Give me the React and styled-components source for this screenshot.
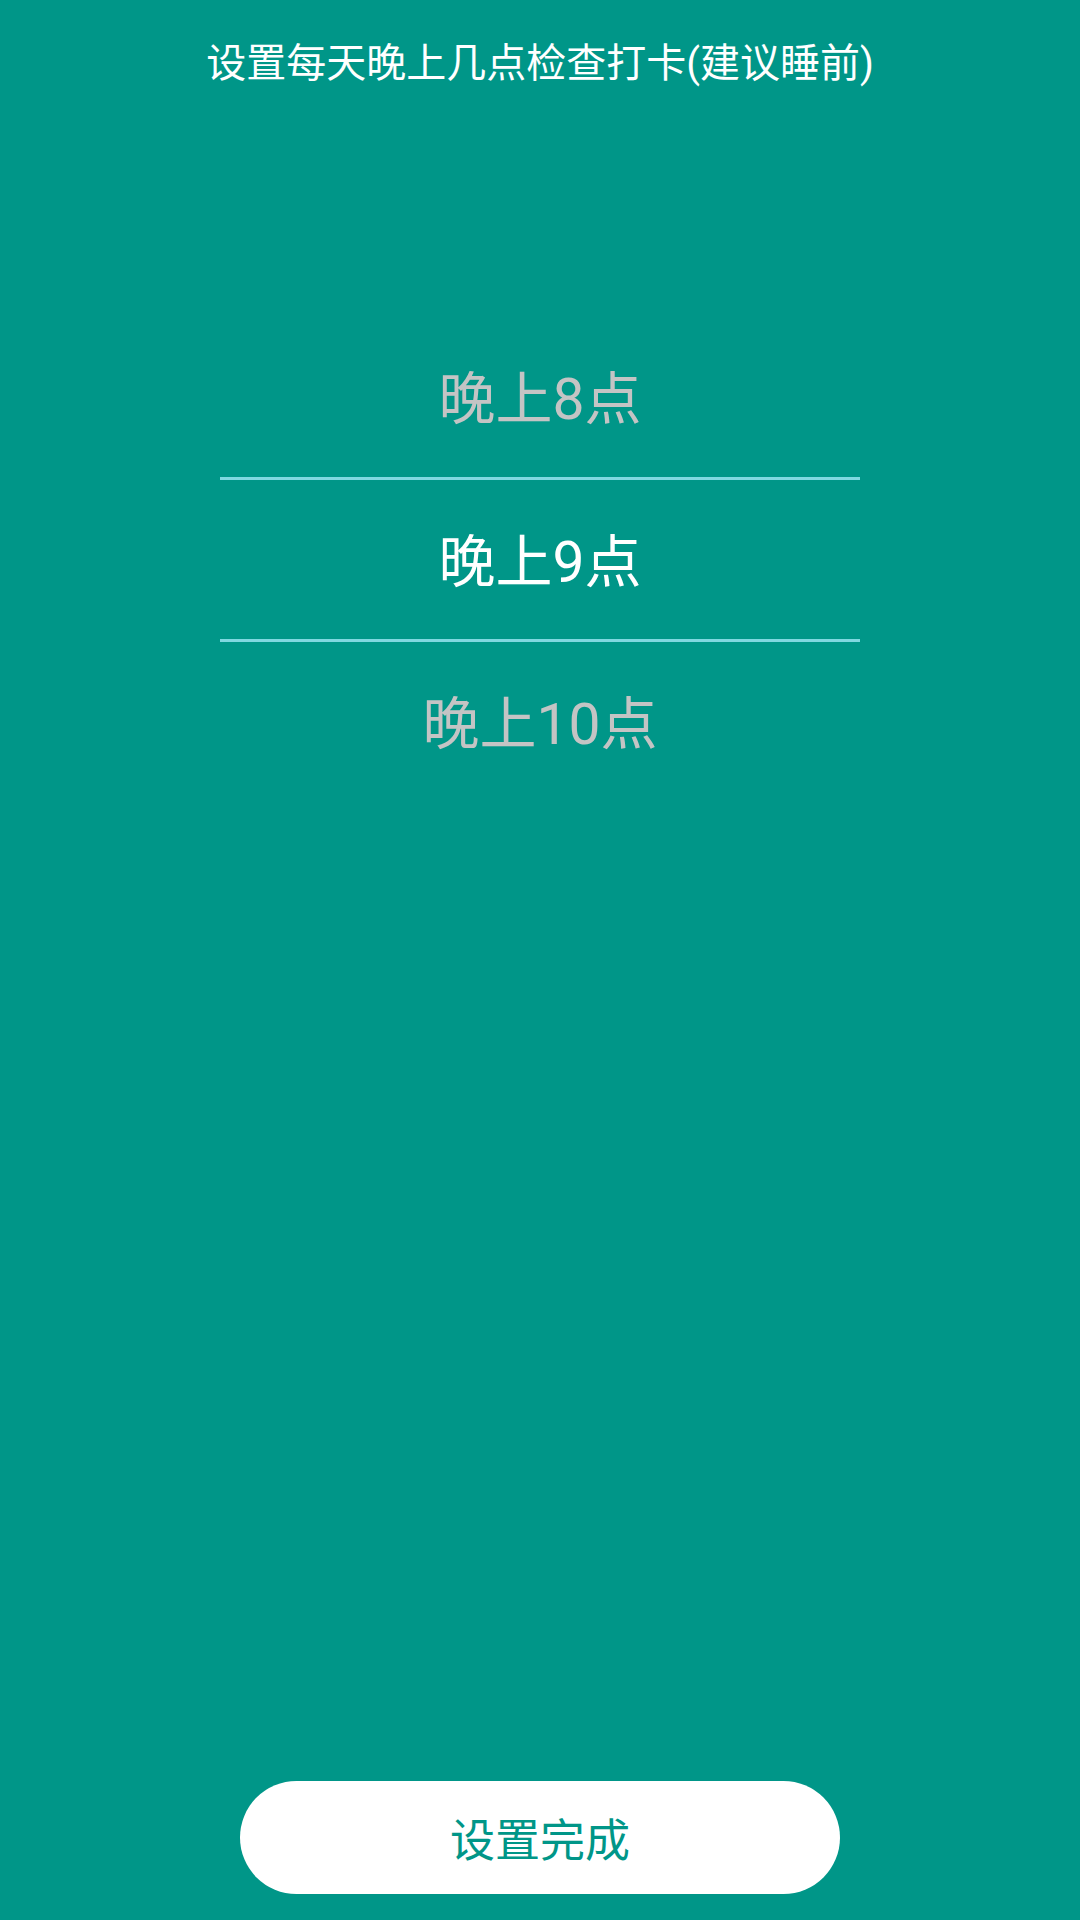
import styled, { createGlobalStyle } from 'styled-components';

const GlobalStyle = createGlobalStyle`
  html, body {
    margin: 0;
    padding: 0;
    background: #009688;
  }
  * {
    box-sizing: border-box;
  }
`;

const Screen = styled.div`
  display: flex;
  flex-direction: column;
  align-items: center;
  width: 1080px;
  height: 1920px;
  background: #009688;
  font-family: Roboto, 'Noto Sans CJK SC', sans-serif;
`;

const Title = styled.div`
  margin-top: 40px;
  color: #ffffff;
  font-size: 40px;
  line-height: 48px;
  text-align: center;
`;

const Wheel = styled.div`
  display: flex;
  flex-direction: column;
  width: 640px;
  margin-top: 229px;
`;

const Item = styled.div`
  display: flex;
  align-items: center;
  justify-content: center;
  height: ${({ $active }) => ($active ? '165px' : '160px')};
  padding-bottom: 6px;
  font-size: 57px;
  color: ${({ $active }) => ($active ? '#ffffff' : '#c4c4c4')};
  border-top: ${({ $active }) => ($active ? '3px solid #80d8e0' : 'none')};
  border-bottom: ${({ $active }) => ($active ? '3px solid #80d8e0' : 'none')};
`;

const Spacer = styled.div`
  flex: 1;
`;

const DoneButton = styled.button`
  width: 600px;
  height: 113px;
  margin-bottom: 26px;
  border: none;
  border-radius: 57px;
  background: #ffffff;
  color: #009688;
  font-family: inherit;
  font-size: 45px;
  cursor: pointer;
`;

const options = ['晚上8点', '晚上9点', '晚上10点'];

export default function App() {
  return (
    <>
      <GlobalStyle />
      <Screen>
        <Title>设置每天晚上几点检查打卡(建议睡前)</Title>
        <Wheel>
          {options.map((label, i) => (
            <Item key={label} $active={i === 1}>
              {label}
            </Item>
          ))}
        </Wheel>
        <Spacer />
        <DoneButton>设置完成</DoneButton>
      </Screen>
    </>
  );
}
